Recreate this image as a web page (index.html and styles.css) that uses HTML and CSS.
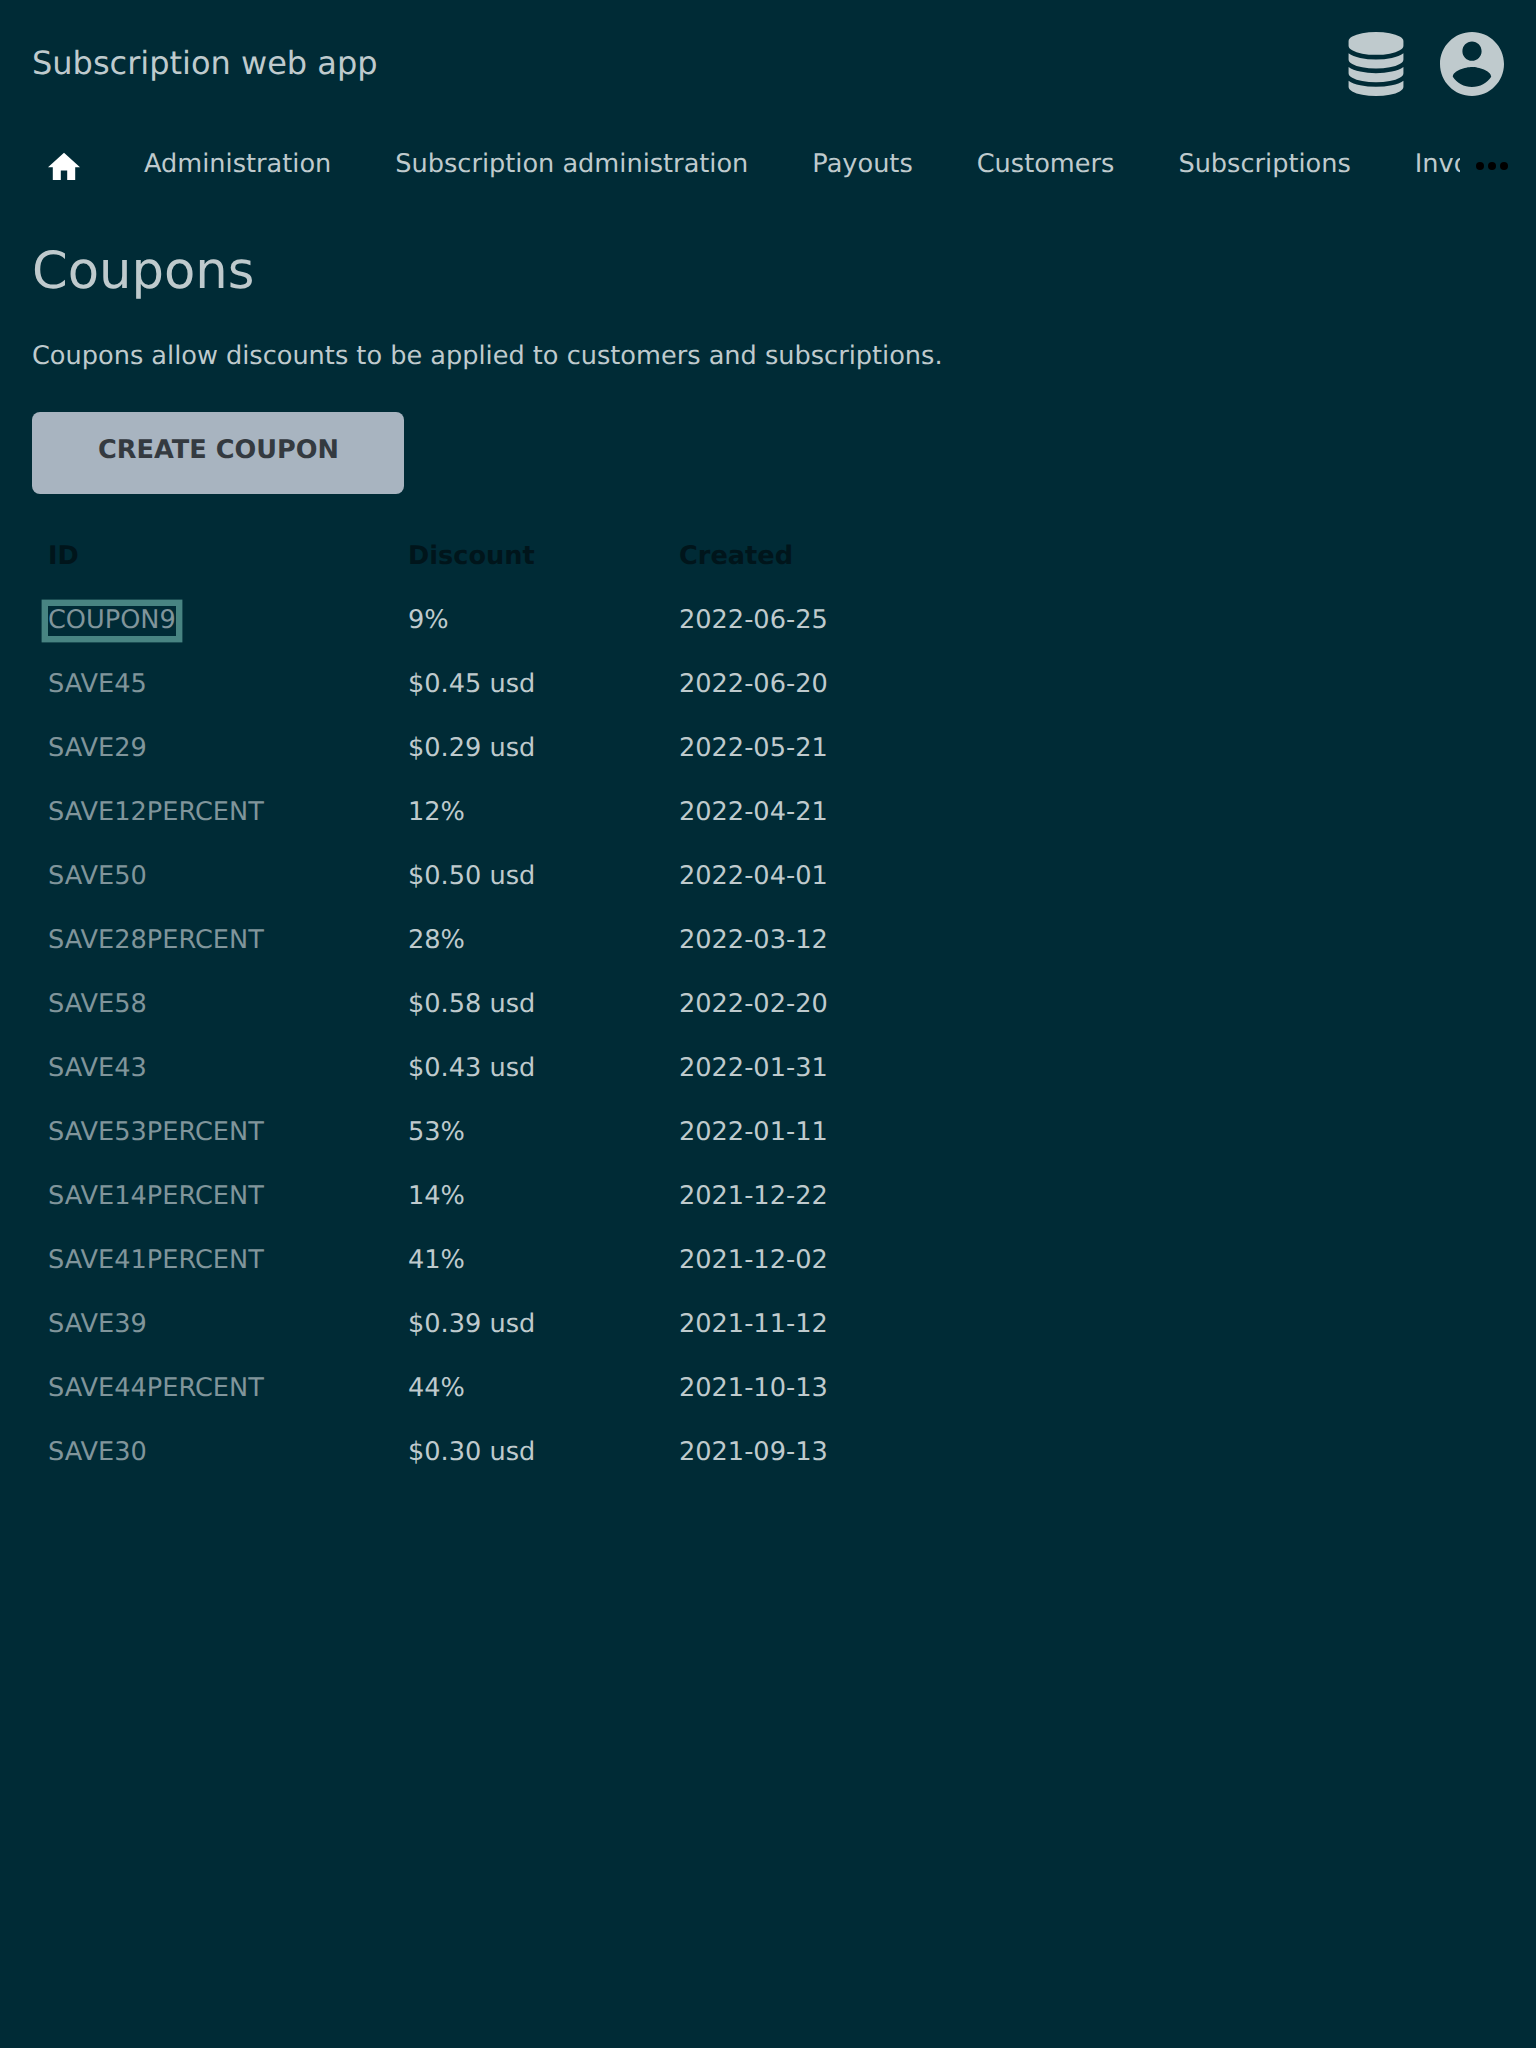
FILE: index.html
```html
<!DOCTYPE html>
<html lang="en">
<head>
<meta charset="utf-8">
<title>Coupons</title>
<link rel="stylesheet" href="styles.css">
</head>
<body>
<header class="header">
  <div class="brand">Subscription web app</div>
  <div class="menus">
    <svg class="icon-database" viewBox="-16 0 1568 1792"><path d="M768 768q237 0 443-43t325-127v170q0 69-103 128t-280 93.5-385 34.5-385-34.5-280-93.5-103-128v-170q119 84 325 127t443 43zm0 768q237 0 443-43t325-127v170q0 69-103 128t-280 93.5-385 34.5-385-34.5-280-93.5-103-128v-170q119 84 325 127t443 43zm0-384q237 0 443-43t325-127v170q0 69-103 128t-280 93.5-385 34.5-385-34.5-280-93.5-103-128v-170q119 84 325 127t443 43zm0-1152q208 0 385 34.5t280 93.5 103 128v128q0 69-103 128t-280 93.5-385 34.5-385-34.5-280-93.5-103-128v-128q0-69 103-128t280-93.5 385-34.5z"/></svg>
    <svg class="icon-account" viewBox="2 2 20 20"><path d="M12 2C6.48 2 2 6.48 2 12s4.480 10 10 10 10-4.480 10-10S17.520 2 12 2zm0 3c1.660 0 3 1.340 3 3s-1.340 3-3 3-3-1.340-3-3 1.340-3 3-3zm0 14.200c-2.500 0-4.710-1.280-6-3.220.03-1.990 4-3.080 6-3.080 1.990 0 5.970 1.090 6 3.080-1.290 1.940-3.500 3.220-6 3.220z"/></svg>
  </div>
</header>
<nav class="nav">
  <div class="nav-items">
    <a class="home"><svg class="icon-home" viewBox="2 2.5 20 17.5"><path d="M10 20v-6h4v6h5v-8h3L12 3 2 12h3v8z"/></svg></a>
    <a>Administration</a>
    <a>Subscription administration</a>
    <a>Payouts</a>
    <a>Customers</a>
    <a>Subscriptions</a>
    <a>Invoices</a>
  </div>
  <svg class="icon-more" viewBox="0 0 32 8"><circle cx="4" cy="4" r="4"/><circle cx="16" cy="4" r="4"/><circle cx="28" cy="4" r="4"/></svg>
</nav>
<main class="content">
  <h1>Coupons</h1>
  <p>Coupons allow discounts to be applied to customers and subscriptions.</p>
  <a class="button">CREATE COUPON</a>
  <table class="coupons">
    <thead><tr><th class="col-id">ID</th><th class="col-discount">Discount</th><th class="col-created">Created</th></tr></thead>
    <tbody>
      <tr><td><a class="focused">COUPON9</a></td><td>9%</td><td>2022-06-25</td></tr>
      <tr><td><a>SAVE45</a></td><td>$0.45 usd</td><td>2022-06-20</td></tr>
      <tr><td><a>SAVE29</a></td><td>$0.29 usd</td><td>2022-05-21</td></tr>
      <tr><td><a>SAVE12PERCENT</a></td><td>12%</td><td>2022-04-21</td></tr>
      <tr><td><a>SAVE50</a></td><td>$0.50 usd</td><td>2022-04-01</td></tr>
      <tr><td><a>SAVE28PERCENT</a></td><td>28%</td><td>2022-03-12</td></tr>
      <tr><td><a>SAVE58</a></td><td>$0.58 usd</td><td>2022-02-20</td></tr>
      <tr><td><a>SAVE43</a></td><td>$0.43 usd</td><td>2022-01-31</td></tr>
      <tr><td><a>SAVE53PERCENT</a></td><td>53%</td><td>2022-01-11</td></tr>
      <tr><td><a>SAVE14PERCENT</a></td><td>14%</td><td>2021-12-22</td></tr>
      <tr><td><a>SAVE41PERCENT</a></td><td>41%</td><td>2021-12-02</td></tr>
      <tr><td><a>SAVE39</a></td><td>$0.39 usd</td><td>2021-11-12</td></tr>
      <tr><td><a>SAVE44PERCENT</a></td><td>44%</td><td>2021-10-13</td></tr>
      <tr><td><a>SAVE30</a></td><td>$0.30 usd</td><td>2021-09-13</td></tr>
    </tbody>
  </table>
</main>
</body>
</html>
```
FILE: styles.css
```css
* { box-sizing: border-box; }
body {
  margin: 0;
  min-height: 2048px;
  background: #002b36;
  color: #bfcacd;
  font: 25.6px/32px "DejaVu Sans", sans-serif;
  text-rendering: geometricPrecision;
}
svg { display: block; }
.header {
  display: flex;
  justify-content: space-between;
  height: 128px;
  padding: 32px 32px 0;
}
.brand { font-size: 32px; line-height: 62px; }
.menus { display: flex; gap: 36px; fill: #bfcacd; }
.icon-database { width: 56px; height: 64px; }
.icon-account { width: 64px; height: 64px; }
.nav {
  display: flex;
  height: 80px;
  padding-right: 28px;
}
.nav-items {
  display: flex;
  flex: 1;
  gap: 64px;
  min-width: 0;
  margin-right: 16px;
  padding: 20px 0 0 48px;
  overflow: hidden;
  white-space: nowrap;
}
.home { padding-top: 4px; }
.icon-home { width: 32px; height: 28px; fill: #fff; }
.icon-more { width: 32px; height: 8px; margin-top: 34px; fill: #000; }
.content { padding: 31px 32px 0; }
h1 { margin: 0; font-size: 51.2px; line-height: 64px; font-weight: 400; }
p { margin: 37px 0 40px; }
.button {
  display: block;
  width: 372px;
  height: 82px;
  padding-left: 1px;
  border-radius: 8px;
  background: #a8b4c0;
  color: #343a40;
  font-weight: 700;
  line-height: 76px;
  text-align: center;
}
.coupons {
  margin-top: 29px;
  border-collapse: collapse;
  table-layout: fixed;
  width: 828px;
}
.coupons th, .coupons td {
  height: 64px;
  padding: 2px 16px 0;
  text-align: left;
  vertical-align: middle;
}
.coupons th { color: #00151b; }
.col-id { width: 360px; }
.col-discount { width: 271px; }
.coupons a { color: #80959b; }
.coupons .focused {
  display: inline-block;
  height: 30px;
  line-height: 28px;
  box-shadow: 0 0 0 6.4px #488482;
}
```
